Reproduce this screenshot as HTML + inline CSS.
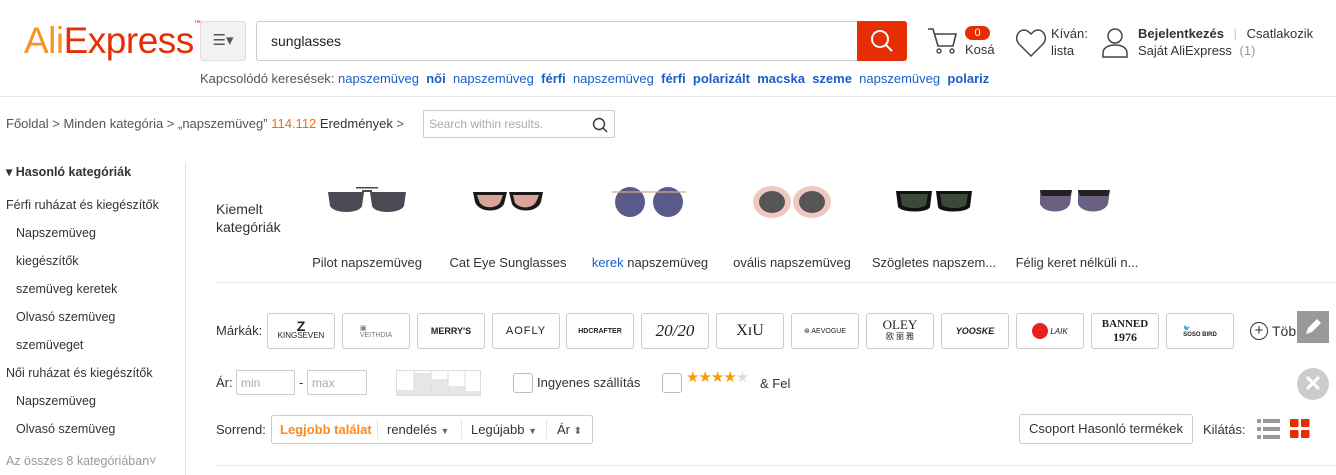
<!DOCTYPE html>
<html><head><meta charset="utf-8"><style>
*{margin:0;padding:0;box-sizing:border-box}
body{width:1336px;height:475px;overflow:hidden;background:#fff;font-family:"Liberation Sans",Arial,sans-serif;color:#333;font-size:13px;position:relative}
.a{position:absolute;white-space:nowrap}
.b{color:#1a5ec9}
.bb{color:#1a5ec9;font-weight:bold}
.brand{position:absolute;top:313px;width:68px;height:36px;border:1px solid #ccc;border-radius:3px;display:flex;align-items:center;justify-content:center;font-size:9px;color:#222}
.side{position:absolute;left:16px;font-size:12.5px;color:#333}
.lbl{position:absolute;top:255px;font-size:13px;color:#333;width:140px;text-align:center}
.cb{position:absolute;width:20px;height:20px;border:1px solid #bbb;border-radius:3px}
</style></head><body>
<div class="a" style="left:24px;top:20px;font-size:37px;letter-spacing:-0.5px;"><span style="color:#f7931e">Ali</span><span style="color:#e62e04">Express</span><sup style="font-size:7px;color:#e62e04;vertical-align:top">™</sup></div>
<div class="a" style="left:200px;top:21px;width:46px;height:40px;background:#f2f2f2;border:1px solid #ddd;border-radius:3px;font-size:15px;color:#555;text-align:center;line-height:38px">☰▾</div>
<div class="a" style="left:256px;top:21px;width:602px;height:40px;border:1px solid #ccc;border-radius:3px 0 0 3px;padding-left:14px;line-height:38px;font-size:14px;color:#222">sunglasses</div>
<div class="a" style="left:857px;top:21px;width:50px;height:40px;background:#e62e04;border-radius:0 3px 3px 0">
<svg width="50" height="40"><circle cx="23" cy="18" r="8" fill="none" stroke="#fff" stroke-width="2"/><line x1="29" y1="24" x2="35" y2="30" stroke="#fff" stroke-width="2"/></svg></div>
<svg class="a" style="left:926px;top:26px" width="34" height="30"><path d="M2 3h5l5 17h15l3-12H9" fill="none" stroke="#444" stroke-width="1.6"/><circle cx="13" cy="25" r="2" fill="none" stroke="#444" stroke-width="1.4"/><circle cx="26" cy="25" r="2" fill="none" stroke="#444" stroke-width="1.4"/></svg>
<div class="a" style="left:965px;top:26px;width:25px;height:14px;background:#e62e04;color:#fff;border-radius:7px;font-size:11px;text-align:center;line-height:14px">0</div>
<div class="a" style="left:965px;top:42px;font-size:13px">Kosá</div>
<svg class="a" style="left:1015px;top:28px" width="34" height="30"><path d="M16 28L4 16C-1 10 3 2 9 2c3 0 5 2 7 4 2-2 4-4 7-4 6 0 10 8 5 14z" fill="none" stroke="#444" stroke-width="1.5"/></svg>
<div class="a" style="left:1051px;top:25px;font-size:13px;color:#333;line-height:17px">Kíván:<br>lista</div>
<svg class="a" style="left:1101px;top:27px" width="28" height="32"><circle cx="14" cy="9" r="7" fill="none" stroke="#444" stroke-width="1.5"/><path d="M2 30v-4c0-5 5-8 12-8s12 3 12 8v4z" fill="none" stroke="#444" stroke-width="1.5"/></svg>
<div class="a" style="left:1138px;top:26px;font-size:13px"><b>Bejelentkezés</b> <span style="color:#ccc;margin:0 6px">|</span> Csatlakozik</div>
<div class="a" style="left:1138px;top:43px;font-size:13px">Saját AliExpress <span style="color:#999;margin-left:4px">(1)</span></div>
<div class="a" style="left:200px;top:71px;font-size:13px;color:#555">Kapcsolódó keresések: <span class="b">napszemüveg</span>&nbsp; <span class="bb">női</span>&nbsp; <span class="b">napszemüveg</span>&nbsp; <span class="bb">férfi</span>&nbsp; <span class="b">napszemüveg</span>&nbsp; <span class="bb">férfi</span>&nbsp; <span class="bb">polarizált</span>&nbsp; <span class="bb">macska</span>&nbsp; <span class="bb">szeme</span>&nbsp; <span class="b">napszemüveg</span>&nbsp; <span class="bb">polariz</span></div>
<div class="a" style="left:0;top:96px;width:1336px;height:1px;background:#e8e8e8"></div>
<div class="a" style="left:6px;top:116px;font-size:13px;color:#555">Főoldal &gt; Minden kategória &gt; „napszemüveg” <span style="color:#f60">114.112</span> <span style="color:#333">Eredmények</span> &gt;</div>
<div class="a" style="left:423px;top:110px;width:192px;height:28px;border:1px solid #ccc;border-radius:2px;font-size:12px;color:#aaa;padding-left:5px;line-height:26px">Search within results.
<svg style="position:absolute;right:6px;top:6px" width="16" height="16"><circle cx="7" cy="7" r="5.5" fill="none" stroke="#333" stroke-width="1.4"/><line x1="11" y1="11" x2="15" y2="15" stroke="#333" stroke-width="1.4"/></svg></div>
<div class="a" style="left:6px;top:164px;font-size:12.5px;font-weight:bold;color:#333">▾ Hasonló kategóriák</div>
<div class="side" style="left:6px;top:198px">Férfi ruházat és kiegészítők</div>
<div class="side" style="top:226px">Napszemüveg</div>
<div class="side" style="top:254px">kiegészítők</div>
<div class="side" style="top:282px">szemüveg keretek</div>
<div class="side" style="top:310px">Olvasó szemüveg</div>
<div class="side" style="top:338px">szemüveget</div>
<div class="side" style="left:6px;top:366px">Női ruházat és kiegészítők</div>
<div class="side" style="top:394px">Napszemüveg</div>
<div class="side" style="top:422px">Olvasó szemüveg</div>
<div class="side" style="left:6px;top:454px;color:#999">Az összes 8 kategóriában˅</div>
<div class="a" style="left:185px;top:162px;width:1px;height:313px;background:#e5e5e5"></div>
<div class="a" style="left:216px;top:200px;font-size:14px;line-height:18px;color:#333">Kiemelt<br>kategóriák</div>
<svg class="a" style="left:326px;top:184px" width="860" height="44">
<g fill="#4a4a55"><path d="M2 8h36l-2 14c-3 8-28 8-32 0z"/><path d="M44 8h36l-2 14c-4 8-29 8-32 0z"/><rect x="36" y="6" width="10" height="2"/><rect x="30" y="3" width="22" height="1.5"/></g>
<g transform="translate(145,0)"><path d="M2 8h34l-3 12c-5 9-25 9-29-2z" fill="#1a1a1a"/><path d="M6 11h26l-3 8c-5 6-18 6-21-2z" fill="#d8a59a"/><path d="M38 8h34l-2 10c-4 11-24 11-29 2z" fill="#1a1a1a"/><path d="M42 11h26l-3 7c-4 7-16 7-21 1z" fill="#d8a59a"/></g>
<g transform="translate(286,0)"><circle cx="18" cy="18" r="15" fill="#5a5a8a"/><circle cx="56" cy="18" r="15" fill="#5a5a8a"/><path d="M0 8h74" stroke="#c9b08a" stroke-width="1.2"/></g>
<g transform="translate(428,0)"><ellipse cx="18" cy="18" rx="19" ry="16" fill="#f0c8c2"/><ellipse cx="58" cy="18" rx="19" ry="16" fill="#f0c8c2"/><ellipse cx="18" cy="18" rx="13" ry="11" fill="#555"/><ellipse cx="58" cy="18" rx="13" ry="11" fill="#555"/></g>
<g transform="translate(570,0)"><path d="M0 7h36l-2 16c-2 6-28 6-32 0z" fill="#111"/><path d="M40 7h36l-2 16c-4 6-30 6-32 0z" fill="#111"/><path d="M4 10h28l-2 11c-4 4-20 4-24 0z" fill="#3a4a3a"/><path d="M44 10h28l-2 11c-4 4-20 4-24 0z" fill="#3a4a3a"/></g>
<g transform="translate(712,0)"><path d="M2 6h32l-2 14c-4 10-26 10-30 0z" fill="#6a6080"/><path d="M40 6h32l-2 14c-4 10-26 10-30 0z" fill="#6a6080"/><path d="M2 6h32l-2 6h-28z M40 6h32l-2 6h-28z" fill="#222"/></g>
</svg>
<div class="lbl" style="left:297px">Pilot napszemüveg</div>
<div class="lbl" style="left:438px">Cat Eye Sunglasses</div>
<div class="lbl" style="left:580px"><span class="b">kerek</span> napszemüveg</div>
<div class="lbl" style="left:722px">ovális napszemüveg</div>
<div class="lbl" style="left:864px">Szögletes napszem...</div>
<div class="lbl" style="left:1007px">Félig keret nélküli n...</div>
<div class="a" style="left:216px;top:282px;width:1120px;height:1px;background:#e8e8e8"></div>
<div class="a" style="left:216px;top:323px;font-size:13px">Márkák:</div>
<div class="brand" style="left:267px;flex-direction:column;font-size:8px;line-height:9px"><b style="font-size:14px">Z</b>KINGSEVEN</div>
<div class="brand" style="left:342px;flex-direction:column;font-size:7px;color:#777">▣<br>VEITHDIA</div>
<div class="brand" style="left:417px;font-weight:bold;font-size:9px">MERRY'S</div>
<div class="brand" style="left:492px;font-size:11px;letter-spacing:1px">AOFLY</div>
<div class="brand" style="left:566px;font-weight:bold;font-size:7px">HDCRAFTER</div>
<div class="brand" style="left:641px;font-family:'Liberation Serif',serif;font-size:17px;font-style:italic">20/20</div>
<div class="brand" style="left:716px;font-family:'Liberation Serif',serif;font-size:16px">XɪU</div>
<div class="brand" style="left:791px;font-size:7px">⊛ AEVOGUE</div>
<div class="brand" style="left:866px;font-family:'Liberation Serif',serif;font-size:13px;flex-direction:column;line-height:12px">OLEY<span style="font-size:8px">欧 丽 雅</span></div>
<div class="brand" style="left:941px;font-weight:bold;font-style:italic;font-size:9px">YOOSKE</div>
<div class="brand" style="left:1016px;font-size:8px;font-style:italic"><span style="display:inline-block;width:16px;height:16px;border-radius:50%;background:#e62020;margin-right:2px"></span>LAIK</div>
<div class="brand" style="left:1091px;font-family:'Liberation Serif',serif;font-weight:bold;font-size:11px;flex-direction:column;line-height:13px">BANNED<span style="font-size:12px">1976</span></div>
<div class="brand" style="left:1166px;font-size:6px;flex-direction:column;font-weight:bold">🐦<br>SOSO BIRD</div>
<div class="a" style="left:1250px;top:322px;width:18px;height:18px;border:1.5px solid #333;border-radius:50%;text-align:center;line-height:15px;font-size:15px">+</div>
<div class="a" style="left:1272px;top:323px;font-size:14px">Több</div>
<div class="a" style="left:1297px;top:311px;width:32px;height:32px;background:#999">
<svg width="32" height="32"><path d="M9 23l2-6 9-9 4 4-9 9z" fill="#fff"/></svg></div>
<div class="a" style="left:216px;top:375px;font-size:13px">Ár:</div>
<div class="a" style="left:236px;top:370px;width:59px;height:25px;border:1px solid #ccc;border-radius:2px;font-size:12px;color:#aaa;padding:5px 4px">min</div>
<div class="a" style="left:299px;top:375px">-</div>
<div class="a" style="left:307px;top:370px;width:60px;height:25px;border:1px solid #ccc;border-radius:2px;font-size:12px;color:#aaa;padding:5px 4px">max</div>
<svg class="a" style="left:396px;top:370px" width="85" height="26"><rect x="0.5" y="0.5" width="84" height="25" fill="#fff" stroke="#ddd"/><rect x="1" y="20" width="17" height="5" fill="#e6e6e6"/><rect x="18" y="3" width="17" height="22" fill="#e6e6e6"/><rect x="35" y="9" width="17" height="16" fill="#e6e6e6"/><rect x="52" y="16" width="17" height="9" fill="#e6e6e6"/><rect x="69" y="21" width="15" height="4" fill="#e6e6e6"/><path d="M18 1v24M35 1v24M52 1v24M69 1v24" stroke="#ddd"/></svg>
<div class="cb" style="left:513px;top:373px"></div>
<div class="a" style="left:537px;top:375px;font-size:13px">Ingyenes szállítás</div>
<div class="cb" style="left:662px;top:373px"></div>
<div class="a" style="left:686px;top:368px;font-size:15px;letter-spacing:-1px;color:#ff9900">★★★★<span style="color:#ddd">★</span></div>
<div class="a" style="left:760px;top:376px;font-size:13px">&amp; Fel</div>
<div class="a" style="left:1297px;top:368px;width:32px;height:32px;border-radius:50%;background:#ccc;color:#fff;text-align:center;line-height:32px;font-size:22px;font-weight:bold">✕</div>
<div class="a" style="left:216px;top:422px;font-size:13px">Sorrend:</div>
<div class="a" style="left:271px;top:415px;width:322px;height:29px;border:1px solid #ccc;border-radius:3px;font-size:13px;line-height:27px">
<span style="position:absolute;left:8px;color:#ff8a1a;font-weight:bold">Legjobb találat</span>
<span style="position:absolute;left:105px;top:4px;height:19px;border-left:1px solid #e5e5e5"></span>
<span style="position:absolute;left:115px">rendelés <span style="font-size:9px;color:#666">▼</span></span>
<span style="position:absolute;left:189px;top:4px;height:19px;border-left:1px solid #e5e5e5"></span>
<span style="position:absolute;left:199px">Legújabb <span style="font-size:9px;color:#666">▼</span></span>
<span style="position:absolute;left:274px;top:4px;height:19px;border-left:1px solid #e5e5e5"></span>
<span style="position:absolute;left:285px">Ár <span style="font-size:10px;color:#666">⬍</span></span>
</div>
<div class="a" style="left:1019px;top:414px;width:174px;height:30px;border:1px solid #ccc;border-radius:3px;font-size:13px;text-align:center;line-height:28px">Csoport Hasonló termékek</div>
<div class="a" style="left:1203px;top:422px;font-size:13px">Kilátás:</div>
<svg class="a" style="left:1257px;top:419px" width="24" height="20"><g fill="#999"><rect x="0" y="0" width="4" height="4"/><rect x="6" y="0" width="17" height="4"/><rect x="0" y="8" width="4" height="4"/><rect x="6" y="8" width="17" height="4"/><rect x="0" y="16" width="4" height="4"/><rect x="6" y="16" width="17" height="4"/></g></svg>
<svg class="a" style="left:1290px;top:419px" width="20" height="19"><g fill="#e62e04"><rect x="0" y="0" width="8.5" height="8" rx="1"/><rect x="11" y="0" width="8.5" height="8" rx="1"/><rect x="0" y="11" width="8.5" height="8" rx="1"/><rect x="11" y="11" width="8.5" height="8" rx="1"/></g></svg>
<div class="a" style="left:216px;top:465px;width:1120px;height:1px;background:#e8e8e8"></div>
</body></html>
